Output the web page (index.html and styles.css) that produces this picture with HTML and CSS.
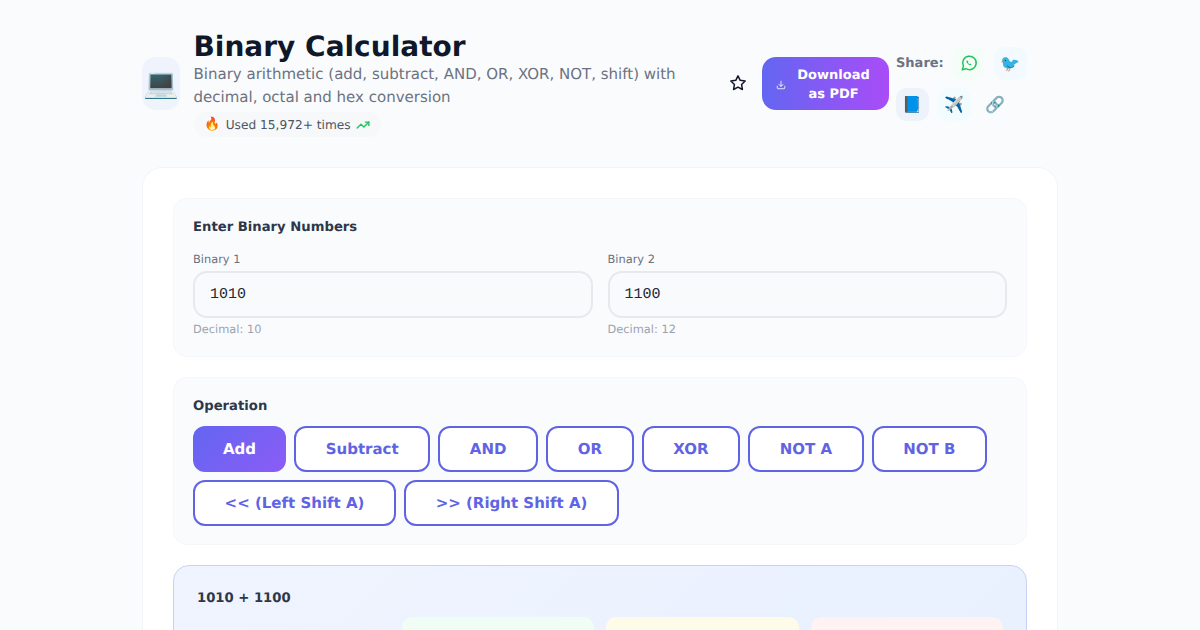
FILE: index.html
```html
<!DOCTYPE html>
<html lang="en">
<head>
<meta charset="utf-8">
<title>Binary Calculator</title>
<link rel="stylesheet" href="styles.css">
</head>
<body>
<div class="page">
  <header class="header">
    <div class="title-group">
      <div class="app-icon">💻</div>
      <div class="title-text">
        <h1>Binary Calculator</h1>
        <p class="desc">Binary arithmetic (add, subtract, AND, OR, XOR, NOT, shift) with decimal, octal and hex conversion</p>
        <div class="usage">
          <span class="fire">🔥</span><span>Used 15,972+ times</span>
          <svg class="trend" viewBox="0 0 24 24" fill="none" stroke="#22c55e" stroke-width="2.4" stroke-linecap="round" stroke-linejoin="round"><polyline points="22 7 13.5 15.5 8.5 10.5 2 17"/><polyline points="16 7 22 7 22 13"/></svg>
        </div>
      </div>
    </div>
    <div class="actions">
      <button class="star" aria-label="Favourite">
        <svg viewBox="0 0 24 24" fill="none" stroke="#111827" stroke-width="2" stroke-linecap="round" stroke-linejoin="round"><path d="M12 2.5l2.95 5.98 6.6.96-4.78 4.65 1.13 6.57L12 17.56l-5.9 3.1 1.13-6.57-4.78-4.65 6.6-.96z"/></svg>
      </button>
      <button class="download">
        <svg class="dl-icon" viewBox="0 0 24 24" fill="none" stroke="#fff" stroke-width="2" stroke-linecap="round" stroke-linejoin="round"><path d="M12 3v12"/><path d="M7 11l5 4 5-4"/><path d="M21 15v4a2 2 0 0 1-2 2H5a2 2 0 0 1-2-2v-4"/></svg>
        <span>Download as PDF</span>
      </button>
      <div class="share">
        <span class="share-label">Share:</span>
        <span class="share-btn wa">
          <svg viewBox="0 0 24 24" fill="none" stroke="#22c55e" stroke-width="2" stroke-linecap="round" stroke-linejoin="round"><path d="M3 21l1.65-4.9A9 9 0 1 1 8 19.6z"/><path d="M9 8.5c-.6.6-.6 1.8.3 3.3.9 1.5 2.3 2.7 3.7 3.1 1 .3 2 0 2.5-.8l-2-1.3-.9.7c-.8-.4-1.6-1.2-2-2l.6-.9-1.2-2.1z" fill="#22c55e" stroke="none"/></svg>
        </span>
        <span class="share-btn tw">🐦</span>
        <span class="share-btn fb">📘</span>
        <span class="share-btn tg">✈️</span>
        <span class="share-btn ln">🔗</span>
      </div>
    </div>
  </header>

  <main class="card">
    <section class="panel">
      <h2>Enter Binary Numbers</h2>
      <div class="inputs">
        <div class="field">
          <label class="field-label" for="a">Binary 1</label>
          <input id="a" class="field-input" value="1010">
          <div class="hint">Decimal: 10</div>
        </div>
        <div class="field">
          <label class="field-label" for="b">Binary 2</label>
          <input id="b" class="field-input" value="1100">
          <div class="hint">Decimal: 12</div>
        </div>
      </div>
    </section>

    <section class="panel">
      <h2>Operation</h2>
      <div class="ops">
        <button class="op active">Add</button>
        <button class="op">Subtract</button>
        <button class="op">AND</button>
        <button class="op">OR</button>
        <button class="op">XOR</button>
        <button class="op">NOT A</button>
        <button class="op">NOT B</button>
        <button class="op">&lt;&lt; (Left Shift A)</button>
        <button class="op">&gt;&gt; (Right Shift A)</button>
      </div>
    </section>

    <section class="result">
      <div class="expr">1010 + 1100</div>
      <div class="tiles">
        <div class="tile t-blue"></div>
        <div class="tile t-green"></div>
        <div class="tile t-yellow"></div>
        <div class="tile t-red"></div>
      </div>
    </section>
  </main>
</div>
</body>
</html>
```

FILE: styles.css
```css
* { box-sizing: border-box; text-rendering: geometricPrecision; }
html, body { margin: 0; height: 630px; overflow: hidden; }
body {
  background: #fafbfd;
  font-family: "DejaVu Sans", sans-serif;
  color: #1f2937;
}
.page { width: 916px; height: 630px; margin: 0 auto; padding-top: 27px; overflow: hidden; }

.header { display: flex; align-items: center; justify-content: space-between; height: 113px; margin-bottom: 27px; }
.title-group { display: flex; align-items: center; gap: 14px; width: 552px; }
.app-icon {
  flex: none; width: 38px; height: 53px; border-radius: 14px;
  background: #eff3fb; display: flex; align-items: center; justify-content: center;
  font-size: 28.8px; overflow: visible;
}
.title-text { flex: 1; margin-top: -2px; margin-left: -0.5px; }
h1 { margin: 0 0 -1px; padding-top: 1px; font-size: 28px; line-height: 35px; font-weight: 700; color: #0f172a; }
.desc { margin: 0; font-size: 15px; line-height: 23px; color: #6b7280; }
.usage {
  display: inline-flex; align-items: center; gap: 5px; margin-top: 3px;
  height: 25px; padding: 0 11px; border-radius: 13px; background: #f6f8fa;
  font-size: 12.2px; color: #4b5563; vertical-align: top;
}
.fire { font-size: 13px; }
.trend { width: 14px; height: 14px; }

.actions { display: flex; align-items: center; gap: 7px; width: 310px; margin-right: 27px; }
.star { flex: none; width: 34px; height: 34px; padding: 0 0 2px; border: 0; background: none; display: flex; align-items: center; justify-content: center; }
.star svg { width: 18px; height: 18px; }
.download {
  flex: none; width: 127px; height: 53px; border: 0; border-radius: 14px; padding: 2px 16px 0 14px;
  background: linear-gradient(90deg, #6366f1, #a94cf7); color: #fff;
  font: 700 13px/19px "DejaVu Sans", sans-serif;
  display: flex; align-items: center; gap: 8px;
}
.dl-icon { flex: none; width: 10px; height: 10px; }
.share { flex: none; display: flex; flex-wrap: wrap; align-items: center; gap: 8px 8.5px; width: 135px; }
.share-label { font-size: 13px; font-weight: 700; color: #6b7280; }
.share-btn {
  width: 33px; height: 33px; border-radius: 11px; display: flex; align-items: center; justify-content: center;
  font-size: 16px;
}
.share-btn svg { width: 18px; height: 18px; }
.wa { background: #f5fdf8; }
.tw { background: #f2f9ff; }
.fb { background: #eef2fb; }
.tg { background: #f2fbfd; }
.ln { background: #fafbfd; }

.card {
  background: #fff; border: 1px solid #f1f5f9; border-radius: 20px 20px 0 0;
  padding: 30px 30px 0; height: 470px;
}
.panel {
  background: #fafbfd; border: 1px solid #f4f6fa; border-radius: 14px;
  padding: 20px 19px 18px; margin-bottom: 20px;
}
h2 { margin: 0 0 10px; font-size: 13.2px; line-height: 18px; font-weight: 700; color: #2d3748; }
.inputs { display: grid; grid-template-columns: 1fr 1fr; gap: 15px; padding-top: 4px; }
.field-label { display: block; font-size: 11.4px; line-height: 16px; margin-bottom: 4px; color: #6b7280; }
.field-input {
  display: block; width: 100%; height: 47px; padding: 0 15px; border: 2px solid #e4eaee; border-radius: 14px;
  background: #f8fafc; color: #1f2937; font: 15px "Liberation Mono", monospace; outline: 0;
}
.hint { margin-top: 3px; font-size: 11.4px; line-height: 17px; color: #9ca3af; }
.ops { display: flex; flex-wrap: wrap; gap: 8px; }
.op {
  height: 46px; padding: 0 29.6px; border: 2px solid #6064e4; border-radius: 12px; background: #fff;
  color: #6064e4; font: 700 15px "DejaVu Sans", sans-serif;
}
.op.active { border: 0; padding: 0 30px; background: linear-gradient(135deg, #6366f1, #8b5cf6); color: #fff; }

.result {
  background: linear-gradient(135deg, #f0f4ff, #e8f0fe); border: 1px solid #c7d2f6; border-radius: 16px; padding: 24px 23px 0; height: 120px;
}
.expr { font-size: 13.2px; font-weight: 700; line-height: 18px; color: #2d3748; margin-bottom: 9px; }
.tiles { display: grid; grid-template-columns: repeat(4, 1fr); gap: 12px; }
.tile { height: 40px; border-radius: 10px; }
.t-blue { background: transparent; }
.t-green { background: #f0fdf4; }
.t-yellow { background: #fefce8; }
.t-red { background: #fef2f2; }
```
